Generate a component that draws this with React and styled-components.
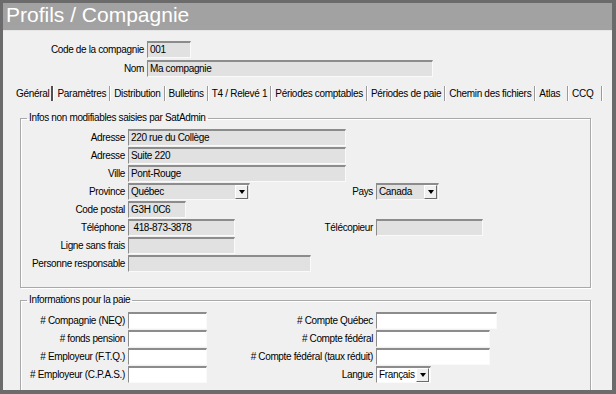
import React from 'react';
import styled, { createGlobalStyle } from 'styled-components';

const GlobalStyle = createGlobalStyle`
  html, body {
    margin: 0;
    padding: 0;
    background: #6b6b6b;
  }
  body {
    font-family: "Liberation Sans", Arial, sans-serif;
  }
`;

const TABS = [
  'Général', 'Paramètres', 'Distribution', 'Bulletins', 'T4 / Relevé 1',
  'Périodes comptables', 'Périodes de paie', 'Chemin des fichiers', 'Atlas', 'CCQ',
];

const INFOS = [
  { label: 'Adresse', value: '220 rue du Collège', w: 218 },
  { label: 'Adresse', value: 'Suite 220', w: 218 },
  { label: 'Ville', value: 'Pont-Rouge', w: 218 },
  { label: 'Province', value: 'Québec', w: 122, select: true, right: { label: 'Pays', value: 'Canada', w: 63, select: true } },
  { label: 'Code postal', value: 'G3H 0C6', w: 58 },
  { label: 'Téléphone', value: '\u00a0418-873-3878', w: 107, right: { label: 'Télécopieur', value: '', w: 107 } },
  { label: 'Ligne sans frais', value: '', w: 107 },
  { label: 'Personne responsable', value: '', w: 183 },
];

const PAIE = [
  { label: '# Compagnie (NEQ)', w: 79, right: { label: '# Compte Québec', w: 121 } },
  { label: '# fonds pension', w: 79, right: { label: '# Compte fédéral', w: 114 } },
  { label: '# Employeur (F.T.Q.)', w: 79, right: { label: '# Compte fédéral (taux réduit)', w: 114 } },
  { label: '# Employeur (C.P.A.S.)', w: 79, right: { label: 'Langue', value: 'Français', w: 55, select: true } },
];

const Field = ({ value, w, select, editable }) => (
  <TextBox $w={w} $editable={editable}>
    {value}
    {select && (
      <DropButton>
        <Arrow />
      </DropButton>
    )}
  </TextBox>
);

const FormRow = ({ row, editable }) => (
  <Row>
    <Cell $w={row.right ? 273 : null}>
      <Label $w={104}>{row.label}</Label>
      <Field value={row.value} w={row.w} select={row.select} editable={editable} />
    </Cell>
    {row.right && (
      <Cell>
        <Label $w={79}>{row.right.label}</Label>
        <Field value={row.right.value} w={row.right.w} select={row.right.select} editable={editable} />
      </Cell>
    )}
  </Row>
);

const tabPadding = t => (t === 'Général' ? 2 : t === 'Atlas' ? 7 : t === 'CCQ' ? 8 : 3);

const App = () => {
  return (
    <>
      <GlobalStyle />
      <Window>
        <TitleBar>Profils / Compagnie</TitleBar>
        <Content>
          <Header>
            <HeaderRow>
              <HeaderLabel>Code de la compagnie</HeaderLabel>
              <Field value="001" w={44} />
            </HeaderRow>
            <HeaderRow>
              <HeaderLabel>Nom</HeaderLabel>
              <Field value="Ma compagnie" w={286} />
            </HeaderRow>
          </Header>

          <TabStrip>
            {TABS.map((t, i) => (
              <Tab key={t} $active={i === 0} $pr={tabPadding(t)}>
                {t}
              </Tab>
            ))}
          </TabStrip>

          <Group $mt={11}>
            <Legend>Infos non modifiables saisies par SatAdmin</Legend>
            {INFOS.map((row, i) => (
              <FormRow key={i} row={row} />
            ))}
          </Group>

          <Group $mt={6} $pt={5}>
            <Legend>Informations pour la paie</Legend>
            {PAIE.map((row, i) => (
              <FormRow key={i} row={row} editable />
            ))}
          </Group>
        </Content>
      </Window>
    </>
  );
};

export default App;

const Window = styled.div`
  width: 616px;
  height: 394px;
  box-sizing: border-box;
  border-style: solid;
  border-color: #6b6b6b;
  border-width: 3px 4px 4px 3px;
  display: flex;
  flex-direction: column;
  overflow: hidden;
  background: #f0f0f0;
`;

const TitleBar = styled.div`
  flex: none;
  height: 27px;
  background: #a2a2a2;
  color: #fff;
  font-size: 21px;
  line-height: 23px;
  padding-left: 3px;
  border-bottom: 1px solid #e6e6e6;
`;

const Content = styled.div`
  flex: 1;
  padding-top: 9px;
  font-size: 10px;
  letter-spacing: -0.35px;
  color: #000;
`;

const Header = styled.div`
  display: flex;
  flex-direction: column;
  gap: 1px;
`;

const HeaderRow = styled.div`
  display: flex;
  align-items: center;
  gap: 3px;
  height: 18px;
`;

const HeaderLabel = styled.span`
  width: 141px;
  text-align: right;
  white-space: nowrap;
`;

const TabStrip = styled.div`
  display: flex;
  align-items: center;
  height: 16px;
  margin: 8px 0 0 9px;
  letter-spacing: -0.3px;
`;

const Tab = styled.div`
  height: 15px;
  line-height: 15px;
  padding: 0 ${p => p.$pr}px 0 4px;
  white-space: nowrap;
  border-right: ${p => (p.$active ? '2px solid #505050' : '1px solid #9a9a9a')};
  box-shadow: 1px 0 0 #fff;
`;

const Group = styled.fieldset`
  box-sizing: border-box;
  width: 571px;
  min-width: 0;
  margin: ${p => p.$mt}px 0 0 17px;
  padding: ${p => p.$pt || 4}px 0 15px 0;
  border: 1px solid #a9a9a9;
  box-shadow: inset 1px 1px 0 #fff, 1px 1px 0 #fff;
`;

const Legend = styled.legend`
  margin-left: 6px;
  padding: 0 2px;
  line-height: 12px;
`;

const Row = styled.div`
  display: flex;
  align-items: center;
  height: 18px;
`;

const Cell = styled.div`
  flex: none;
  display: flex;
  align-items: center;
  gap: 3px;
  width: ${p => (p.$w ? `${p.$w}px` : 'auto')};
`;

const Label = styled.div`
  flex: none;
  display: flex;
  justify-content: flex-end;
  width: ${p => p.$w}px;
  white-space: nowrap;
`;

const TextBox = styled.div`
  position: relative;
  box-sizing: border-box;
  flex: none;
  width: ${p => p.$w}px;
  height: 17px;
  padding: 0 2px;
  line-height: 14px;
  white-space: nowrap;
  overflow: hidden;
  background: ${p => (p.$editable ? '#ffffff' : '#e1e1e1')};
  border-style: solid;
  border-width: 2px 1px 1px 1px;
  border-color: #8c8c8c #fafafa #fafafa #8c8c8c;
`;

const DropButton = styled.span`
  position: absolute;
  top: 0;
  right: 1px;
  box-sizing: border-box;
  width: 13px;
  height: 14px;
  display: flex;
  align-items: center;
  justify-content: center;
  background: #f0f0f0;
  border: 1px solid;
  border-color: #ffffff #6a6a6a #6a6a6a #ffffff;
`;

const Arrow = styled.span`
  width: 0;
  height: 0;
  border-left: 3px solid transparent;
  border-right: 3px solid transparent;
  border-top: 4px solid #000;
`;
